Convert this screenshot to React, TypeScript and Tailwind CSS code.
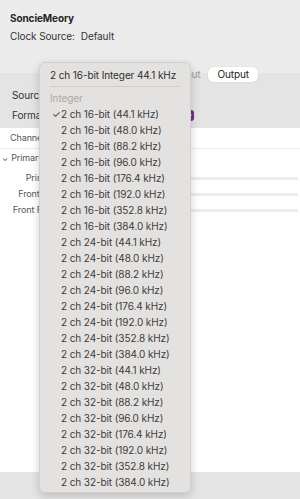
const rates = ["44.1", "48.0", "88.2", "96.0", "176.4", "192.0", "352.8", "384.0"];
const depths = ["16", "24", "32"];

const items = depths.flatMap((d) => rates.map((r) => `2 ch ${d}-bit (${r} kHz)`));

function FormatMenu() {
  return (
    <div className="absolute left-[39px] top-[62px] w-[152px] rounded-[6px] border border-[#d3d1cf] bg-[#e4e2e0] pt-[4px] pb-[2px] shadow-[0_3px_10px_rgba(0,0,0,0.18)]">
      <div className="whitespace-nowrap px-[10px] text-[10px] leading-[16px] text-[#2e2e2e]">
        2 ch 16-bit Integer 44.1 kHz
      </div>
      <div className="mx-[10px] my-[3px] h-px bg-[#cfcdcb]" />
      <div className="px-[10px] text-[10px] leading-[16px] text-[#aaa8a6]">Integer</div>
      {items.map((label, i) => (
        <div key={label} className="flex items-center whitespace-nowrap text-[10px] leading-[16px] text-[#3c3c3c]">
          <span className="w-[21px] pl-[12px] text-[10px]">{i === 0 ? "✓" : ""}</span>
          <span>{label}</span>
        </div>
      ))}
    </div>
  );
}

function Track() {
  return <div className="h-[3px] w-full rounded-full bg-[#ececec]" />;
}

export default function App() {
  return (
    <div className="relative flex h-[499px] w-[300px] flex-col overflow-hidden bg-white font-['Inter',sans-serif] tracking-[-0.1px] text-[#262626]">
      <div className="h-[73px] bg-[#ececec] px-[10px] pt-[12px]">
        <div className="text-[10px] font-bold leading-[13px]">SoncieMeory</div>
        <div className="mt-[5px] flex gap-[6px] text-[10px] leading-[13px] text-[#333]">
          <span>Clock Source:</span>
          <span>Default</span>
        </div>
      </div>
      <div className="h-[55px] bg-[#e4e4e4]">
        <div className="flex justify-end pr-[42px]">
          <div className="-mt-[6px] flex items-center gap-[8px] text-[10px] leading-[13px]">
            <span className="text-[#9a9a9a]">Input</span>
            <span className="rounded-[5px] bg-white px-[9px] py-[1px] text-[#222] shadow-[0_0_1px_rgba(0,0,0,0.3)]">Output</span>
          </div>
        </div>
        <div className="mt-[7px] flex flex-col gap-[7px] pl-[12px] text-[10px] leading-[13px] text-[#333]">
          <span>Source</span>
          <div className="flex items-center">
            <span>Format</span>
            <span className="ml-[136px] flex h-[11px] w-[14px] items-center justify-end rounded-[3px] bg-[#7a2a8c] pr-[2px] text-[8px] leading-none text-white">
              ⌃
            </span>
          </div>
        </div>
      </div>
      <div className="flex-1 bg-white">
        <div className="border-b border-[#ececec] px-[10px] py-[4px] text-[9px] leading-[12px] text-[#555]">Channels</div>
        <div className="flex items-center gap-[3px] pl-[2px] pt-[3px] text-[9px] leading-[12px] text-[#555]">
          <span className="text-[8px]">⌄</span>
          <span>Primary</span>
        </div>
        <div className="mt-[8px] flex flex-col gap-[4px] text-[9px] leading-[12px] text-[#555]">
          {["Primary", "Front Left", "Front Right"].map((n) => (
            <div key={n} className="flex items-center">
              <span className="w-[62px] pr-[4px] text-right">{n}</span>
              <div className="ml-[128px] mr-[2px] flex-1">
                <Track />
              </div>
            </div>
          ))}
        </div>
      </div>
      <div className="h-[27px] bg-[#e5e5e5]" />
      <FormatMenu />
    </div>
  );
}
